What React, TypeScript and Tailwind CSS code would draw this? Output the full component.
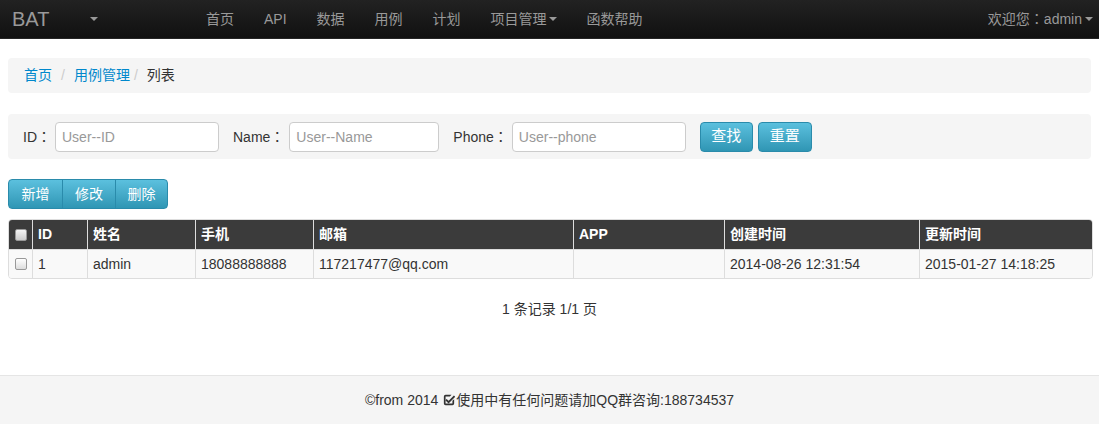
import { useState } from 'react'

const navItems = ['首页', 'API', '数据', '用例', '计划']

function Caret({ className = '' }: { className?: string }) {
  return <span className={`inline-block w-0 h-0 border-x-[4px] border-x-transparent border-t-[4px] ${className}`} />
}

// full-width colon, centred like the reference
function Colon() {
  return <span className="font-['Noto_Sans_CJK_TC',sans-serif]">：</span>
}

const cols = [
  { label: 'ID', w: 'w-[55px]' },
  { label: '姓名', w: 'w-[108px]' },
  { label: '手机', w: 'w-[118px]' },
  { label: '邮箱', w: 'w-[260px]' },
  { label: 'APP', w: 'w-[151px]' },
  { label: '创建时间', w: 'w-[195px]' },
  { label: '更新时间', w: '' },
]

const rows = [
  ['1', 'admin', '18088888888', '117217477@qq.com', '', '2014-08-26 12:31:54', '2015-01-27 14:18:25'],
]

const inputCls = 'h-[30px] px-[6px] bg-white border border-[#ccc] rounded-[4px] outline-none placeholder:text-[#999]'
const btnCls = 'h-[30px] text-[15px] text-white rounded-[4px] border border-[#2a8bab] bg-gradient-to-b from-[#5bc0de] to-[#2f96b4]'

export default function App() {
  const [checked, setChecked] = useState(false)

  return (
    <div className="min-h-[424px] flex flex-col bg-white text-[14px] text-[#333] font-['Liberation_Sans','Noto_Sans_CJK_SC',sans-serif]">
      {/* navbar */}
      <div className="h-[39px] flex items-center bg-gradient-to-b from-[#222] to-[#111] border-b border-[#252525] text-[#999]">
        <div className="w-[191px] flex items-center pl-[12px]">
          <span className="text-[20px] leading-none">BAT</span>
          <Caret className="ml-[41px] border-t-[#999]" />
        </div>
        <nav className="flex items-center">
          {navItems.map((n) => (
            <a key={n} className="px-[15px]">{n}</a>
          ))}
          <a className="px-[15px] flex items-center gap-[2px]">项目管理<Caret className="border-t-[#999]" /></a>
          <a className="px-[15px]">函数帮助</a>
        </nav>
        <div className="ml-auto mr-[6px] flex items-center gap-[3px]">
          <span>欢迎您<Colon />admin</span><Caret className="border-t-[#999]" />
        </div>
      </div>

      <div className="px-[8px] flex-1">
        {/* breadcrumb */}
        <div className="mt-[19px] h-[35px] flex items-center px-[16px] bg-[#f5f5f5] rounded-[4px]">
          <a className="text-[#0088cc]">首页</a>
          <span className="px-[9px] text-[#ccc]">/</span>
          <a className="text-[#0088cc]">用例管理</a>
          <span className="pl-[4px] pr-[9px] text-[#ccc]">/</span>
          <span>列表</span>
        </div>

        {/* search */}
        <div className="mt-[21px] h-[45px] flex items-center px-[15px] bg-[#f5f5f5] rounded-[4px]">
          <label className="mr-[4px]">ID<Colon /></label>
          <input placeholder="User--ID" className={`w-[164px] ${inputCls}`} />
          <label className="ml-[14px] mr-[5px]">Name<Colon /></label>
          <input placeholder="User--Name" className={`w-[150px] ${inputCls}`} />
          <label className="ml-[14px] mr-[4px]">Phone<Colon /></label>
          <input placeholder="User--phone" className={`w-[174px] ${inputCls}`} />
          <button className={`ml-[14px] w-[53px] ${btnCls}`}>查找</button>
          <button className={`ml-[5px] w-[54px] ${btnCls}`}>重置</button>
        </div>

        {/* actions */}
        <div className="mt-[20px] inline-flex h-[30px] rounded-[4px] overflow-hidden border border-[#2a8bab] bg-gradient-to-b from-[#5bc0de] to-[#2f96b4] text-white text-[14px]">
          <button className="w-[53px]">新增</button>
          <button className="w-[53px] border-l border-[#2a8bab]">修改</button>
          <button className="w-[52px] border-l border-[#2a8bab]">删除</button>
        </div>

        {/* table */}
        <div className="mt-[10px] w-[1085px] border border-[#ddd] rounded-[4px] overflow-hidden">
          <div className="flex h-[29px] bg-[#3b3b3b] text-white font-bold">
            <div className="w-[23px] flex items-center justify-center">
              <span className="w-[12px] h-[12px] rounded-[2px] bg-gradient-to-b from-[#f4f4f4] to-[#ccc] border border-[#999]" />
            </div>
            {cols.map((c, i) => (
              <div key={i} className={`${c.w} ${c.w ? '' : 'flex-1'} flex items-center px-[5px] border-l border-[#ddd]`}>{c.label}</div>
            ))}
          </div>
          {rows.map((r, ri) => (
            <div key={ri} className="flex h-[29px] bg-[#f9f9f9] border-t border-[#ddd]">
              <div className="w-[23px] flex items-center justify-center">
                <input type="checkbox" checked={checked} onChange={() => setChecked(!checked)} className="w-[12px] h-[12px] appearance-none rounded-[2px] border border-[#999] bg-gradient-to-b from-[#fff] to-[#ddd]" />
              </div>
              {r.map((cell, ci) => (
                <div key={ci} className={`${cols[ci].w} ${cols[ci].w ? '' : 'flex-1'} flex items-center px-[5px] border-l border-[#ddd]`}>{cell}</div>
              ))}
            </div>
          ))}
        </div>

        <div className="mt-[20px] text-center">1 条记录 1/1 页</div>
      </div>

      {/* footer */}
      <footer className="mt-auto h-[49px] flex items-center justify-center bg-[#f5f5f5] border-t border-[#e5e5e5]">
        ©from 2014
        <svg viewBox="0 0 14 14" className="w-[12px] h-[12px] ml-[5px] mr-[1px]">
          <path d="M1 3a2 2 0 0 1 2-2h7l-2 2H3v8h8V8l2-2v5a2 2 0 0 1-2 2H3a2 2 0 0 1-2-2z" fill="#333" />
          <path d="M3.5 6.5l3 3 7-7" stroke="#333" strokeWidth="2.2" fill="none" />
        </svg>
        使用中有任何问题请加QQ群咨询:188734537
      </footer>
    </div>
  )
}
